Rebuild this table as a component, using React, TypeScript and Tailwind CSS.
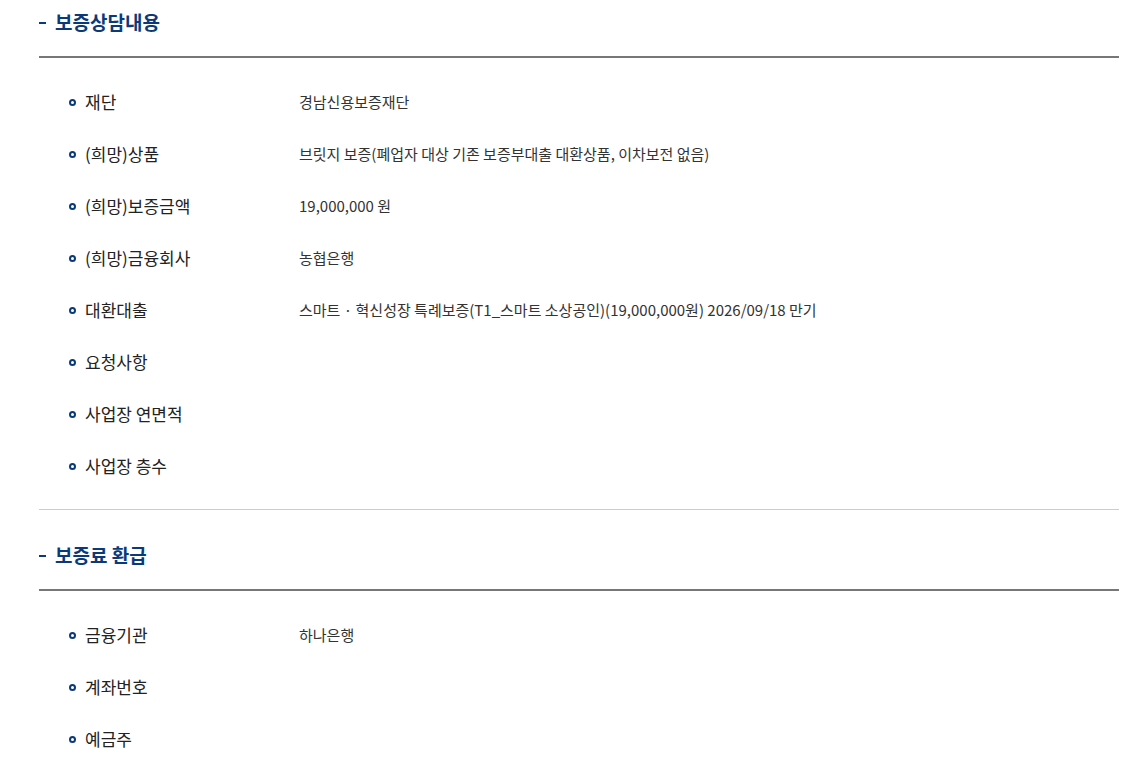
const font = { fontFamily: '"Noto Sans CJK KR", "Noto Sans", sans-serif' }

type Row = { label: string; value?: string }

const consult: Row[] = [
  { label: "재단", value: "경남신용보증재단" },
  { label: "(희망)상품", value: "브릿지 보증(폐업자 대상 기존 보증부대출 대환상품, 이차보전 없음)" },
  { label: "(희망)보증금액", value: "19,000,000 원" },
  { label: "(희망)금융회사", value: "농협은행" },
  { label: "대환대출", value: "스마트 · 혁신성장 특례보증(T1_스마트 소상공인)(19,000,000원) 2026/09/18 만기" },
  { label: "요청사항" },
  { label: "사업장 연면적" },
  { label: "사업장 층수" },
]

const refund: Row[] = [
  { label: "금융기관", value: "하나은행" },
  { label: "계좌번호" },
  { label: "예금주" },
]

function Heading({ title }: { title: string }) {
  return (
    <div className="pt-2 pb-5 border-b-2 border-[#777777]">
      <h3 className="flex items-center h-7 text-[19px] font-bold text-[#0b3a7a]">
        <span className="w-[7px] h-[2px] bg-[#0b3a7a] mr-[9px] mt-[2px]" />
        {title}
      </h3>
    </div>
  )
}

function List({ rows }: { rows: Row[] }) {
  return (
    <ul className="pt-[18px] pl-[30px]">
      {rows.map((r) => (
        <li key={r.label} className="flex items-center h-[52px]">
          <div className="w-[230px] flex items-center shrink-0">
            <span className="w-[7px] h-[7px] rounded-full border-2 border-[#0b3a7a] mr-[9px]" />
            <span className="text-[17px] text-[#222222]">{r.label}</span>
          </div>
          <span className="text-[15px] text-[#333333]">{r.value}</span>
        </li>
      ))}
    </ul>
  )
}

export default function App() {
  return (
    <div className="bg-white min-h-[772px] pl-[39px]" style={font}>
      <div className="w-[1080px]">
        <section className="pb-[17px] border-b border-[#cccccc]">
          <Heading title="보증상담내용" />
          <List rows={consult} />
        </section>
        <section className="mt-[23px]">
          <Heading title="보증료 환급" />
          <List rows={refund} />
        </section>
      </div>
    </div>
  )
}
